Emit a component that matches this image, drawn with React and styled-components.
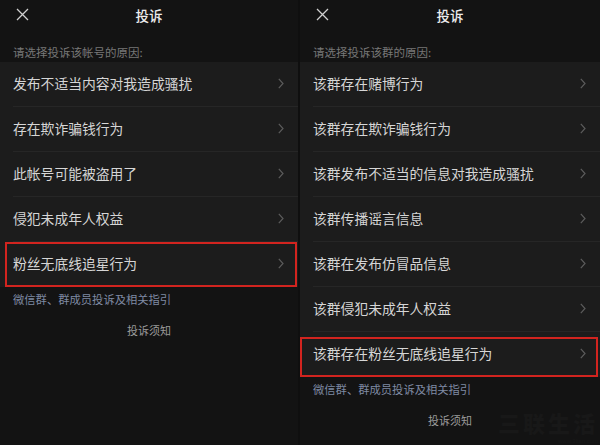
import React from "react";
import styled, { createGlobalStyle } from "styled-components";

const Global = createGlobalStyle`
  html, body { margin: 0; padding: 0; background: #0f0f0f; }
  body { font-family: "Noto Sans CJK SC", "Noto Sans", sans-serif; }
  * { box-sizing: border-box; }
`;

const Page = styled.div`
  width: 600px;
  height: 445px;
  display: flex;
  gap: 2px;
  overflow: hidden;
  position: relative;
`;

const Panel = styled.div`
  width: ${(p) => p.$w}px;
  height: 445px;
  background: #131313;
  display: flex;
  flex-direction: column;
`;

const Header = styled.div`
  height: 30px;
  display: flex;
  align-items: center;
  position: relative;
  justify-content: center;
`;

const Close = styled.div`
  position: absolute;
  left: 16px;
  top: 8px;
  width: 13px;
  height: 13px;
  display: flex;
`;

const Title = styled.div`
  color: #ececec;
  font-size: 13.5px;
  font-weight: 500;
  line-height: 30px;
`;

const Label = styled.div`
  padding: 14px 13px 2px;
  line-height: 16px;
  font-size: 11.5px;
  color: #777;
`;

const List = styled.div`
  background: #1c1c1c;
  display: flex;
  flex-direction: column;
`;

const Row = styled.div`
  height: 45px;
  position: relative;
  display: flex;
  align-items: center;
  justify-content: space-between;
  padding: 0 14px 3px 13px;
  &:not(:last-child)::after {
    content: "";
    position: absolute;
    left: 13px;
    right: 0;
    bottom: 0;
    height: 1px;
    background: #262626;
  }
`;

const RowText = styled.span`
  color: #d6d6d6;
  font-size: 13.8px;
  line-height: 20px;
`;

const Highlight = styled.div`
  position: absolute;
  left: ${(p) => p.$l}px;
  right: ${(p) => p.$r}px;
  top: ${(p) => p.$t}px;
  bottom: ${(p) => p.$b}px;
  border: 2px solid #d2241f;
  pointer-events: none;
`;

const Link = styled.div`
  padding: 4px 13px 0;
  line-height: 16px;
  font-size: 11.3px;
  color: #7f8aa3;
`;

const Notice = styled.div`
  margin-top: 15px;
  text-align: center;
  line-height: 16px;
  font-size: 11px;
  color: #9a9a9a;
`;

const Watermark = styled.div`
  position: absolute;
  right: 2px;
  bottom: 0;
  display: flex;
  flex-direction: column;
  align-items: flex-end;
  gap: 4px;
  color: #181818;
  pointer-events: none;
`;

const WmBig = styled.div`
  font-size: 22px;
  font-weight: 900;
  line-height: 24px;
  letter-spacing: 3px;
`;

const WmSmall = styled.div`
  font-family: "Liberation Sans", sans-serif;
  font-size: 6px;
  line-height: 7px;
`;

const XIcon = () => (
  <svg width="13" height="13" viewBox="0 0 13 13">
    <path d="M1 1 L12 12 M12 1 L1 12" stroke="#cfcfcf" strokeWidth="1.3" fill="none" />
  </svg>
);

const Chevron = () => (
  <svg width="6" height="11" viewBox="0 0 6 11">
    <path d="M0.8 0.8 L5 5.5 L0.8 10.2" stroke="#5c5c5c" strokeWidth="1.2" fill="none" />
  </svg>
);

const ReportPanel = ({ w, label, items, hi }) => (
  <Panel $w={w}>
    <Header>
      <Close><XIcon /></Close>
      <Title>投诉</Title>
    </Header>
    <Label>{label}</Label>
    <List>
      {items.map((t, i) => (
        <Row key={i}>
          <RowText>{t}</RowText>
          <Chevron />
          {i === items.length - 1 && <Highlight {...hi} />}
        </Row>
      ))}
    </List>
    <Link>微信群、群成员投诉及相关指引</Link>
    <Notice>投诉须知</Notice>
  </Panel>
);

export default function App() {
  return (
    <>
      <Global />
      <Page>
        <ReportPanel
          w={298}
          label="请选择投诉该帐号的原因:"
          items={[
            "发布不适当内容对我造成骚扰",
            "存在欺诈骗钱行为",
            "此帐号可能被盗用了",
            "侵犯未成年人权益",
            "粉丝无底线追星行为",
          ]}
          hi={{ $l: 5, $r: 1, $t: 0, $b: 0 }}
        />
        <ReportPanel
          w={300}
          label="请选择投诉该群的原因:"
          items={[
            "该群存在赌博行为",
            "该群存在欺诈骗钱行为",
            "该群发布不适当的信息对我造成骚扰",
            "该群传播谣言信息",
            "该群在发布仿冒品信息",
            "该群侵犯未成年人权益",
            "该群存在粉丝无底线追星行为",
          ]}
          hi={{ $l: 0, $r: 2, $t: 5, $b: 0 }}
        />
        <Watermark>
          <WmBig>三联生活</WmBig>
          <WmSmall>www.3lian.com</WmSmall>
        </Watermark>
      </Page>
    </>
  );
}
